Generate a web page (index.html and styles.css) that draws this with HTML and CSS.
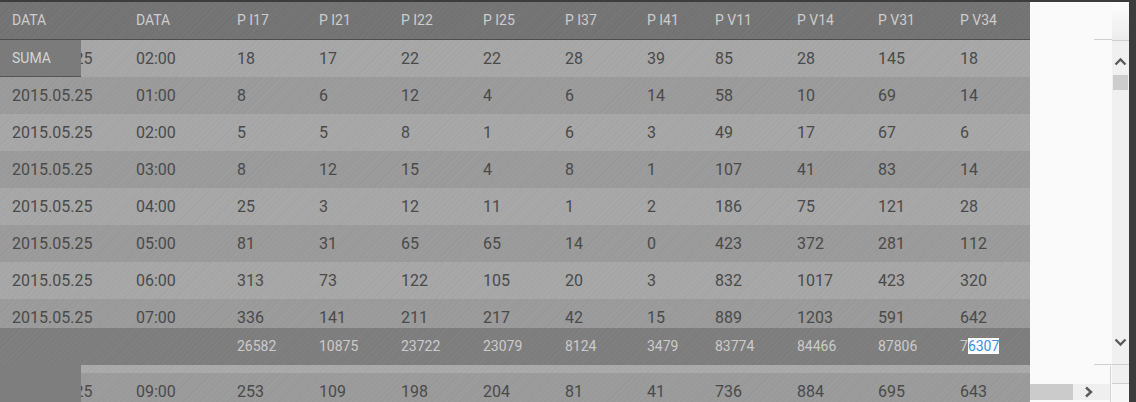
FILE: index.html
```html
<!DOCTYPE html>
<html>
<head>
<meta charset="utf-8">
<link rel="stylesheet" href="styles.css">
</head>
<body>
<div class="page">
  <div class="grid-area">
    <div class="row head">
      <div class="c">DATA</div><div class="c">DATA</div><div class="c">P I17</div><div class="c">P I21</div><div class="c">P I22</div><div class="c">P I25</div><div class="c">P I37</div><div class="c">P I41</div><div class="c">P V11</div><div class="c">P V14</div><div class="c">P V31</div><div class="c">P V34</div>
    </div>
    <div class="body">
      <div class="row light"><div class="first"><div class="suma">SUMA</div><div class="clip"><span class="shift">2015.05.25</span></div></div><div class="c">02:00</div><div class="c">18</div><div class="c">17</div><div class="c">22</div><div class="c">22</div><div class="c">28</div><div class="c">39</div><div class="c">85</div><div class="c">28</div><div class="c">145</div><div class="c">18</div></div>
      <div class="row dark"><div class="c">2015.05.25</div><div class="c">01:00</div><div class="c">8</div><div class="c">6</div><div class="c">12</div><div class="c">4</div><div class="c">6</div><div class="c">14</div><div class="c">58</div><div class="c">10</div><div class="c">69</div><div class="c">14</div></div>
      <div class="row light"><div class="c">2015.05.25</div><div class="c">02:00</div><div class="c">5</div><div class="c">5</div><div class="c">8</div><div class="c">1</div><div class="c">6</div><div class="c">3</div><div class="c">49</div><div class="c">17</div><div class="c">67</div><div class="c">6</div></div>
      <div class="row dark"><div class="c">2015.05.25</div><div class="c">03:00</div><div class="c">8</div><div class="c">12</div><div class="c">15</div><div class="c">4</div><div class="c">8</div><div class="c">1</div><div class="c">107</div><div class="c">41</div><div class="c">83</div><div class="c">14</div></div>
      <div class="row light"><div class="c">2015.05.25</div><div class="c">04:00</div><div class="c">25</div><div class="c">3</div><div class="c">12</div><div class="c">11</div><div class="c">1</div><div class="c">2</div><div class="c">186</div><div class="c">75</div><div class="c">121</div><div class="c">28</div></div>
      <div class="row dark"><div class="c">2015.05.25</div><div class="c">05:00</div><div class="c">81</div><div class="c">31</div><div class="c">65</div><div class="c">65</div><div class="c">14</div><div class="c">0</div><div class="c">423</div><div class="c">372</div><div class="c">281</div><div class="c">112</div></div>
      <div class="row light"><div class="c">2015.05.25</div><div class="c">06:00</div><div class="c">313</div><div class="c">73</div><div class="c">122</div><div class="c">105</div><div class="c">20</div><div class="c">3</div><div class="c">832</div><div class="c">1017</div><div class="c">423</div><div class="c">320</div></div>
      <div class="row dark"><div class="c">2015.05.25</div><div class="c">07:00</div><div class="c">336</div><div class="c">141</div><div class="c">211</div><div class="c">217</div><div class="c">42</div><div class="c">15</div><div class="c">889</div><div class="c">1203</div><div class="c">591</div><div class="c">642</div></div>
    </div>
    <div class="row sum">
      <div class="c"></div><div class="c"></div><div class="c">26582</div><div class="c">10875</div><div class="c">23722</div><div class="c">23079</div><div class="c">8124</div><div class="c">3479</div><div class="c">83774</div><div class="c">84466</div><div class="c">87806</div><div class="c">7<span class="sel">6307</span></div>
    </div>
    <div class="tail">
      <div class="tail-left"></div>
      <div class="tail-right">
        <div class="strip"></div>
        <div class="row dark shifted"><div class="c">2015.05.25</div><div class="c">09:00</div><div class="c">253</div><div class="c">109</div><div class="c">198</div><div class="c">204</div><div class="c">81</div><div class="c">41</div><div class="c">736</div><div class="c">884</div><div class="c">695</div><div class="c">643</div></div>
      </div>
    </div>
  </div>

  <div class="panel">
    <div class="pane-main">
      <div class="pane-blank">
        <div class="pb-top"><div class="seg"></div></div>
      </div>
      <div class="vbar">
        <div class="vbar-head"></div>
        <div class="arrow arrow-up">
          <svg width="17" height="12" viewBox="0 0 17 12"><polyline points="3.5,8.5 8.5,3.5 13.5,8.5" fill="none" stroke="#5a5a5a" stroke-width="2.3"/></svg>
        </div>
        <div class="thumb"></div>
        <div class="vspace"></div>
        <div class="arrow arrow-down">
          <svg width="17" height="12" viewBox="0 0 17 12"><polyline points="3.5,3.5 8.5,8.5 13.5,3.5" fill="none" stroke="#5a5a5a" stroke-width="2.3"/></svg>
        </div>
      </div>
    </div>
    <div class="hline"></div>
    <div class="pane-bottom">
      <div class="hzone">
        <div class="hspace"></div>
        <div class="hbar">
          <div class="hthumb"></div>
          <div class="harrow">
            <svg width="12" height="16" viewBox="0 0 12 16"><polyline points="3,3.5 8,8 3,12.5" fill="none" stroke="#5a5a5a" stroke-width="2.4"/></svg>
          </div>
        </div>
      </div>
      <div class="vsep"></div>
      <div class="corner">
        <div class="corner-top"></div>
        <div class="corner-bot"></div>
      </div>
    </div>
  </div>
</div>
</body>
</html>
```

FILE: styles.css
```css
html, body {
  margin: 0;
  padding: 0;
}
body {
  background: #3c3c3c;
  font-family: Roboto, "Liberation Sans", sans-serif;
  width: 1136px;
  height: 402px;
  overflow: hidden;
}
.page {
  display: flex;
  padding-top: 2px;
  height: 400px;
}
.grid-area {
  width: 1030px;
  display: flex;
  flex-direction: column;
  overflow: hidden;
}
.row {
  display: grid;
  grid-template-columns: 124px 101px 82px 82px 82px 82px 82px 68px 82px 81px 82px 82px;
  height: 37px;
  line-height: 37px;
  font-size: 16px;
  color: #4a4a4a;
  flex: none;
}
.c {
  padding-left: 12px;
  white-space: nowrap;
}
.head {
  background-color: #747474;
  color: #cdcdcd;
  font-size: 14px;
  border-bottom: 1px solid #4e4e4e;
  line-height: 36px;
}
.light {
  background-color: #a7a7a7;
}
.dark {
  background-color: #9b9b9b;
}
.row.light, .row.dark, .head, .sum, .strip {
  background-image: repeating-linear-gradient(135deg, rgba(255,255,255,0.025) 0 1px, rgba(0,0,0,0.02) 1px 2px, transparent 2px 4px);
}
.body {
  height: 288px;
  overflow: hidden;
  flex: none;
}
.first {
  display: flex;
  overflow: hidden;
}
.suma {
  flex: none;
  width: 69px;
  height: 36px;
  padding-left: 12px;
  background: #7b7b7b;
  border-bottom: 1px solid #545454;
  color: #d4d4d4;
  font-size: 14px;
  line-height: 37px;
}
.clip {
  flex: 1;
  overflow: hidden;
  white-space: nowrap;
}
.shift {
  display: inline-block;
  margin-left: -69px;
}
.sum {
  background-color: #7e7e7e;
  color: #cbcbcb;
  font-size: 14px;
}
.sel {
  background: #ffffff;
  color: #3a8ee6;
}
.tail {
  flex: 1;
  display: flex;
  overflow: hidden;
}
.tail-left {
  flex: none;
  width: 81px;
  background: #7e7e7e;
}
.tail-right {
  flex: 1;
  overflow: hidden;
}
.strip {
  height: 8px;
  background-color: #aaaaaa;
}
.shifted {
  margin-left: -81px;
  width: 1030px;
}

/* right white panel with scrollbars */
.panel {
  width: 99px;
  height: 400px;
  background: #fafafa;
  display: flex;
  flex-direction: column;
}
.pane-main {
  display: flex;
  height: 362px;
}
.pane-blank {
  flex: 1;
  display: flex;
  flex-direction: column;
}
.pb-top {
  height: 38px;
  display: flex;
  justify-content: flex-end;
}
.seg {
  width: 18px;
  border-bottom: 1px solid #cfcfcf;
}
.vbar {
  width: 17px;
  background: #f0f0f0;
  display: flex;
  flex-direction: column;
}
.vbar-head {
  height: 38px;
  background: linear-gradient(#fdfdfd, #ececec);
  border-bottom: 1px solid #cfcfcf;
}
.arrow {
  height: 12px;
  display: flex;
  align-items: center;
  justify-content: center;
}
.arrow svg {
  display: block;
}
.arrow-up {
  margin-top: 15px;
}
.thumb {
  margin: 7px 1px 0 1px;
  height: 15px;
  background: #cdcdcd;
}
.vspace {
  flex: 1;
}
.arrow-down {
  margin-bottom: 16px;
}
.hline {
  height: 1px;
  margin-left: 64px;
  background: #cfcfcf;
}
.pane-bottom {
  flex: 1;
  display: flex;
}
.hzone {
  width: 80px;
  display: flex;
  flex-direction: column;
}
.hspace {
  height: 19px;
}
.hbar {
  height: 16px;
  background: #efefef;
  display: flex;
}
.hthumb {
  width: 43px;
  background: #cbcbcb;
}
.harrow {
  flex: 1;
  display: flex;
  align-items: center;
  justify-content: center;
  padding-right: 6px;
}
.harrow svg {
  display: block;
}
.vsep {
  width: 1px;
  margin-top: 1px;
  background: #d4d4d4;
}
.corner {
  width: 17px;
  margin-left: 1px;
  display: flex;
  flex-direction: column;
}
.corner-top {
  height: 18px;
  background: #f0f0f0;
  border-bottom: 1px solid #d0d0d0;
}
.corner-bot {
  flex: 1;
  background: #f6f6f6;
}
```
